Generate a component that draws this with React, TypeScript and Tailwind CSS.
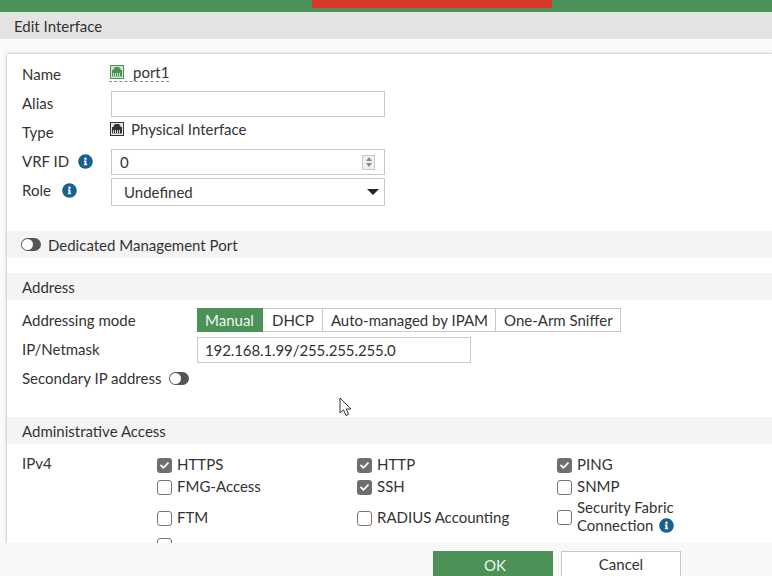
import React from "react";
import { FaInfoCircle, FaCheck } from "react-icons/fa";

function PortIcon({ color, fill }: { color: string; fill: string }) {
  return (
    <svg width="14" height="14" viewBox="0 0 14 14" className="shrink-0">
      <rect x="0.5" y="0.5" width="13" height="13" fill={fill} stroke={color} />
      <path d="M2 11.5V5h1.5V3.5h1V2h5v1.5h1V5H12v6.5z" fill={color} />
      <path d="M3.5 8v3.5M5.5 8v3.5M7.5 8v3.5M9.5 8v3.5" stroke={fill} strokeWidth="0.9" />
    </svg>
  );
}

function Info({ className = "" }: { className?: string }) {
  return <FaInfoCircle className={`text-[15px] text-[#17608f] ${className}`} />;
}

function Toggle() {
  return (
    <span className="flex h-[13px] w-5 items-center rounded-full bg-[#555] pl-[1px]">
      <span className="h-[11px] w-[11px] rounded-full bg-white" />
    </span>
  );
}

function Check({ label, checked }: { label: React.ReactNode; checked?: boolean }) {
  return (
    <div className="flex items-center gap-[5px] leading-[18px]">
      {checked ? (
        <span className="flex h-[15px] w-[15px] shrink-0 items-center justify-center rounded-[3px] bg-[#6e6e6e]">
          <FaCheck className="text-[9px] text-white" />
        </span>
      ) : (
        <span className="h-[15px] w-[15px] shrink-0 rounded-[3px] border border-[#777] bg-white" />
      )}
      <span className="pb-[2px]">{label}</span>
    </div>
  );
}

function Band({ children, className = "" }: { children: React.ReactNode; className?: string }) {
  return (
    <div className={`flex h-[27px] items-center bg-[#f4f4f4] ${className}`}>
      {children}
    </div>
  );
}

export default function App() {
  return (
    <div className="relative flex h-[576px] w-[772px] flex-col overflow-hidden bg-[#fafafa] font-['Lato',sans-serif] text-[15px] text-[#333]">
      <div className="flex h-3 shrink-0 justify-center bg-[#4b9158] pl-[92px]">
        <div className="h-2 w-60 bg-[#d93a27]" />
      </div>
      <div className="flex h-[27px] shrink-0 items-center bg-[#e4e4e4] pt-px pl-[14px]">Edit Interface</div>

      <div className="mt-[15px] ml-[7px] min-h-0 flex-1 overflow-hidden bg-white shadow-[0_0_3px_rgba(0,0,0,0.35)]">
        <div className="pt-[6px]">
          <div className="flex h-[28px] items-center pl-[15px]">
            <span className="w-[89px]">Name</span>
            <span className="-mt-[3px] -ml-[2px] flex items-center gap-[9px] border-b border-dashed border-[#888] pl-px leading-[17px]">
              <PortIcon color="#4b9158" fill="#cfe6d3" />
              port1
            </span>
          </div>
          <div className="mt-[3px] flex h-[26px] items-center pl-[15px]">
            <span className="w-[89px] pb-[2px]">Alias</span>
            <div className="h-[26px] w-[274px] border border-[#c8c8c8] bg-white" />
          </div>
          <div className="mt-px flex h-[28px] items-center pl-[15px]">
            <span className="w-[89px] pt-[1px]">Type</span>
            <span className="-mt-[6px] -ml-px flex items-center gap-[7px]">
              <PortIcon color="#333" fill="#e8e8e8" />
              Physical Interface
            </span>
          </div>
          <div className="mt-[3px] flex h-[26px] items-center pl-[15px]">
            <span className="flex w-[89px] items-center gap-[9px] pb-[2px]">
              VRF ID <Info />
            </span>
            <div className="flex h-[26px] w-[274px] items-center justify-between border border-[#c8c8c8] bg-white pr-[9px] pl-2">
              <span className="pt-px">0</span>
              <span className="flex h-[15px] w-[13px] flex-col items-center justify-center gap-[2px] border border-[#c9c9d4] bg-[#f0f0f4]">
                <span className="h-0 w-0 border-x-[3px] border-b-[4px] border-x-transparent border-b-[#8a8a9a]" />
                <span className="h-0 w-0 border-x-[3px] border-t-[4px] border-x-transparent border-t-[#8a8a9a]" />
              </span>
            </div>
          </div>
          <div className="mt-[3px] flex h-[28px] items-center pl-[15px]">
            <span className="flex w-[89px] items-center gap-[11px] pb-[4px]">
              Role <Info />
            </span>
            <div className="flex h-[28px] w-[274px] items-center justify-between border border-[#c8c8c8] bg-white pr-[5px] pl-3">
              <span className="pt-px">Undefined</span>
              <span className="h-0 w-0 border-x-[6px] border-t-[6px] border-x-transparent border-t-[#222]" />
            </div>
          </div>
        </div>

        <Band className="mt-[25px] gap-[7px] pl-[14px]">
          <Toggle />
          <span className="pt-px">Dedicated Management Port</span>
        </Band>

        <Band className="mt-[15px] pl-[15px]">
          <span className="pt-px">Address</span>
        </Band>
        <div className="mt-[8px] flex h-6 items-center pl-[15px]">
          <span className="w-[175px] pt-px">Addressing mode</span>
          <div className="flex h-6 border border-l-0 border-[#c8c8c8]">
            <span className="-my-px flex w-[66px] items-center bg-[#4b9158] pt-px pl-2 text-[#eef6ef]">Manual</span>
            <span className="flex items-center border-r border-[#c8c8c8] pt-px pr-2 pl-[9px]">DHCP</span>
            <span className="flex items-center border-r border-[#c8c8c8] pt-px pr-[7px] pl-[8px]">Auto-managed by IPAM</span>
            <span className="flex items-center pt-px pr-[7px] pl-[8px]">One-Arm Sniffer</span>
          </div>
        </div>
        <div className="mt-[5px] flex h-[26px] items-center pl-[15px]">
          <span className="w-[175px] pb-[2px]">IP/Netmask</span>
          <div className="flex h-[26px] w-[274px] items-center border border-[#c8c8c8] pl-[7px] tracking-[-0.1px]">192.168.1.99/255.255.255.0</div>
        </div>
        <div className="mt-[3px] flex h-6 items-center gap-2 pl-[15px]">
          <span className="pt-px">Secondary IP address</span>
          <Toggle />
        </div>

        <Band className="mt-[27px] pl-[15px]">
          <span className="pt-[2px]">Administrative Access</span>
        </Band>
        <div className="mt-[11px] flex pl-[15px]">
          <span className="w-[135px] pt-px leading-[15px]">IPv4</span>
          <div className="grid grid-cols-[200px_200px_200px]">
            <div className="h-[22px]"><Check label="HTTPS" checked /></div>
            <div className="h-[22px]"><Check label="HTTP" checked /></div>
            <div className="h-[22px]"><Check label="PING" checked /></div>
            <div className="h-[31px]"><Check label="FMG-Access" /></div>
            <div className="h-[31px]"><Check label="SSH" checked /></div>
            <div className="h-[31px]"><Check label="SNMP" /></div>
            <div className="h-[30px]"><Check label="FTM" /></div>
            <div className="h-[30px]"><Check label="RADIUS Accounting" /></div>
            <div className="-mt-[10px] h-[40px]">
              <Check
                label={
                  <span className="flex flex-col">
                    <span>Security Fabric</span>
                    <span className="flex items-center gap-[6px]">
                      Connection <Info />
                    </span>
                  </span>
                }
              />
            </div>
            <div><Check label="" /></div>
          </div>
        </div>
      </div>

      <div className="flex h-[33px] shrink-0 items-start gap-2 bg-[#f8f8f8] pt-2 pl-[433px]">
        <div className="flex h-[30px] w-[120px] shrink-0 items-start justify-center bg-[#4b9158] pt-[3px] pl-1 text-[#eef6ef]">OK</div>
        <div className="flex h-[30px] w-[120px] shrink-0 items-start justify-center border border-[#c8c8c8] bg-white pt-[1px]">Cancel</div>
      </div>

      {/* mouse pointer from the capture */}
      <svg width="15" height="21" viewBox="0 0 15 21" className="absolute top-[397px] left-[339px]">
        <path d="M1 1v15l3.5-3.2L7 18.5l2.6-1.2-2.4-5.3H12z" fill="#fff" stroke="#333" strokeWidth="1" />
      </svg>
    </div>
  );
}
